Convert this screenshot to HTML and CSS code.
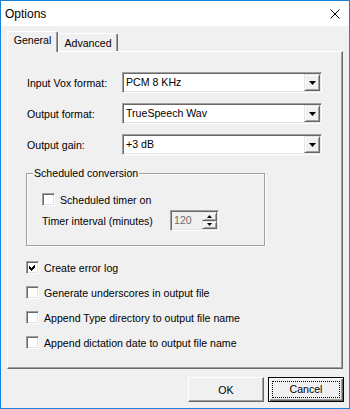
FILE: index.html
```html
<!DOCTYPE html>
<html lang="en">
<head>
    <meta charset="UTF-8">
    <title>Options</title>
    <link rel="stylesheet" href="styles.css">
</head>
<body>
    <div class="window">
        <div class="titlebar">
            <span class="title">Options</span>
            <svg class="close" width="10" height="10" viewBox="0 0 10 10">
                <path d="M0.5 0.5L9.5 9.5M9.5 0.5L0.5 9.5" stroke="#000" stroke-width="1"/>
            </svg>
        </div>

        <div class="dialog">
            <div class="tabs">
                <div class="tab active">General</div>
                <div class="tab">Advanced</div>
            </div>

            <div class="panel">
                <div class="field-row">
                    <span class="field-label">Input Vox format:</span>
                    <div class="combo">
                        <span class="combo-text">PCM 8 KHz</span>
                        <span class="drop-btn"><svg width="7" height="4" viewBox="0 0 7 4"><path d="M0 0h7L3.5 4z"/></svg></span>
                    </div>
                </div>
                <div class="field-row">
                    <span class="field-label">Output format:</span>
                    <div class="combo">
                        <span class="combo-text">TrueSpeech Wav</span>
                        <span class="drop-btn"><svg width="7" height="4" viewBox="0 0 7 4"><path d="M0 0h7L3.5 4z"/></svg></span>
                    </div>
                </div>
                <div class="field-row">
                    <span class="field-label">Output gain:</span>
                    <div class="combo">
                        <span class="combo-text">+3 dB</span>
                        <span class="drop-btn"><svg width="7" height="4" viewBox="0 0 7 4"><path d="M0 0h7L3.5 4z"/></svg></span>
                    </div>
                </div>

                <fieldset class="group">
                    <legend>Scheduled conversion</legend>
                    <div class="check-row inner">
                        <span class="checkbox"></span>
                        <span>Scheduled timer on</span>
                    </div>
                    <div class="timer-row">
                        <span class="timer-label">Timer interval (minutes)</span>
                        <div class="spin">
                            <span class="spin-text">120</span>
                            <span class="spin-btns">
                                <span class="spin-btn"><svg width="5" height="3" viewBox="0 0 5 3"><path d="M2.5 0L5 3H0z"/></svg></span>
                                <span class="spin-btn"><svg width="5" height="3" viewBox="0 0 5 3"><path d="M0 0h5L2.5 3z"/></svg></span>
                            </span>
                        </div>
                    </div>
                </fieldset>

                <div class="check-row">
                    <span class="checkbox"><svg width="9" height="9" viewBox="0 0 9 9"><path d="M1 3L3 5L7 1V4L3 8L1 6z"/></svg></span>
                    <span>Create error log</span>
                </div>
                <div class="check-row">
                    <span class="checkbox"></span>
                    <span>Generate underscores in output file</span>
                </div>
                <div class="check-row">
                    <span class="checkbox"></span>
                    <span>Append Type directory to output file name</span>
                </div>
                <div class="check-row">
                    <span class="checkbox"></span>
                    <span>Append dictation date to output file name</span>
                </div>
            </div>

            <div class="buttons">
                <button class="btn">OK</button>
                <button class="btn default"><span class="focus">Cancel</span></button>
            </div>
        </div>
    </div>
</body>
</html>
```

FILE: styles.css
```css
* {
    box-sizing: border-box;
}
body {
    margin: 0;
    font-family: "Liberation Sans", Arial, sans-serif;
    font-size: 10.6px;
    color: #000;
}
.window {
    width: 350px;
    height: 409px;
    border: 1px solid #1883d7;
    background-color: #f0f0f0;
    display: flex;
    flex-direction: column;
}
.titlebar {
    height: 25px;
    background-color: #fff;
    display: flex;
    align-items: center;
    justify-content: space-between;
    padding: 0 9px 0 4px;
    font-size: 12px;
}
.close {
    display: block;
}
.dialog {
    flex: 1;
    padding: 5px 6px 0;
    display: flex;
    flex-direction: column;
}
/* Tabs */
.tabs {
    display: flex;
    align-items: flex-end;
    height: 20px;
}
.tab {
    width: 60px;
    height: 18px;
    padding-top: 3px;
    line-height: 13px;
    text-align: center;
    border: 1px solid;
    border-bottom: none;
    border-color: #fff #696969 #fff #fff;
    border-radius: 2px 2px 0 0;
    box-shadow: inset -1px 0 0 #a0a0a0;
}
.tab.active {
    width: 51px;
    height: 21px;
    padding-top: 2px;
    margin-bottom: -1px;
    position: relative;
    z-index: 1;
    background-color: #f0f0f0;
}
.panel {
    height: 318px;
    padding: 20px 0 0 18px;
    border: 1px solid;
    border-color: #fff #696969 #696969 #fff;
    box-shadow: inset -1px -1px 0 #a0a0a0;
}
/* Combo rows */
.field-row {
    display: flex;
    align-items: center;
    height: 21px;
    margin-bottom: 10px;
    padding-left: 1px;
}
.field-label {
    width: 95px;
}
.combo {
    width: 200px;
    height: 21px;
    display: flex;
    background-color: #fff;
    border: 1px solid;
    border-color: #a0a0a0 #fff #fff #a0a0a0;
    box-shadow: inset 1px 1px 0 #696969, inset -1px -1px 0 #e3e3e3;
    padding: 1px;
}
.combo-text {
    flex: 1;
    line-height: 17px;
    padding-left: 2px;
}
.drop-btn {
    width: 16px;
    height: 17px;
    display: flex;
    align-items: center;
    justify-content: center;
    background-color: #f0f0f0;
    border: 1px solid;
    border-color: #e3e3e3 #696969 #696969 #e3e3e3;
    box-shadow: inset 1px 1px 0 #fff, inset -1px -1px 0 #a0a0a0;
}
.drop-btn svg, .spin-btn svg {
    display: block;
}
/* Group box */
.group {
    width: 239px;
    margin: 12px 0 15px 0;
    padding: 13px 0 14px 0;
    border: 1px solid #a0a0a0;
    box-shadow: inset 1px 1px 0 #fff, 1px 1px 0 #fff;
    min-width: 0;
}
.group legend {
    margin-left: 6px;
    padding: 0 1px;
    line-height: 13px;
    background-color: #f0f0f0;
}
.check-row {
    display: flex;
    align-items: center;
    height: 13px;
    margin-bottom: 12px;
}
.check-row.inner {
    margin-bottom: 0;
    padding-left: 15px;
}
.checkbox {
    width: 13px;
    height: 13px;
    margin-right: 5px;
    display: flex;
    align-items: center;
    justify-content: center;
    background-color: #fff;
    border: 1px solid;
    border-color: #a0a0a0 #fff #fff #a0a0a0;
    box-shadow: inset 1px 1px 0 #696969, inset -1px -1px 0 #e3e3e3;
}
.checkbox svg {
    display: block;
    shape-rendering: crispEdges;
}
.timer-row {
    display: flex;
    align-items: center;
    margin-top: 4px;
    padding-left: 15px;
}
.timer-label {
    width: 128px;
}
.spin {
    width: 49px;
    height: 21px;
    display: flex;
    border: 1px solid;
    border-color: #a0a0a0 #fff #fff #a0a0a0;
    box-shadow: inset 1px 1px 0 #696969, inset -1px -1px 0 #e3e3e3;
    padding: 1px;
}
.spin-text {
    flex: 1;
    line-height: 17px;
    padding-left: 2px;
    color: #6d6d6d;
}
.spin-btns {
    width: 15px;
    display: flex;
    flex-direction: column;
}
.spin-btn {
    flex: 1;
    display: flex;
    align-items: center;
    justify-content: center;
    border: 1px solid;
    border-color: #e3e3e3 #696969 #696969 #e3e3e3;
    box-shadow: inset 1px 1px 0 #fff, inset -1px -1px 0 #a0a0a0;
}
/* Buttons */
.buttons {
    display: flex;
    justify-content: flex-end;
    gap: 4px;
    margin-top: 8px;
    margin-right: -1px;
}
.btn {
    width: 76px;
    height: 25px;
    padding: 0;
    font-family: inherit;
    font-size: inherit;
    color: #000;
    background-color: #f0f0f0;
    border: 1px solid;
    border-color: #fff #696969 #696969 #fff;
    box-shadow: inset -1px -1px 0 #a0a0a0;
}
.btn.default {
    border: 1px solid #000;
    padding: 1px;
    box-shadow: inset 1px 1px 0 #fff, inset -1px -1px 0 #696969, inset -2px -2px 0 #a0a0a0;
}
.focus {
    display: block;
    margin: 2px;
    height: 17px;
    line-height: 15px;
    border: 1px dotted #000;
}
```
